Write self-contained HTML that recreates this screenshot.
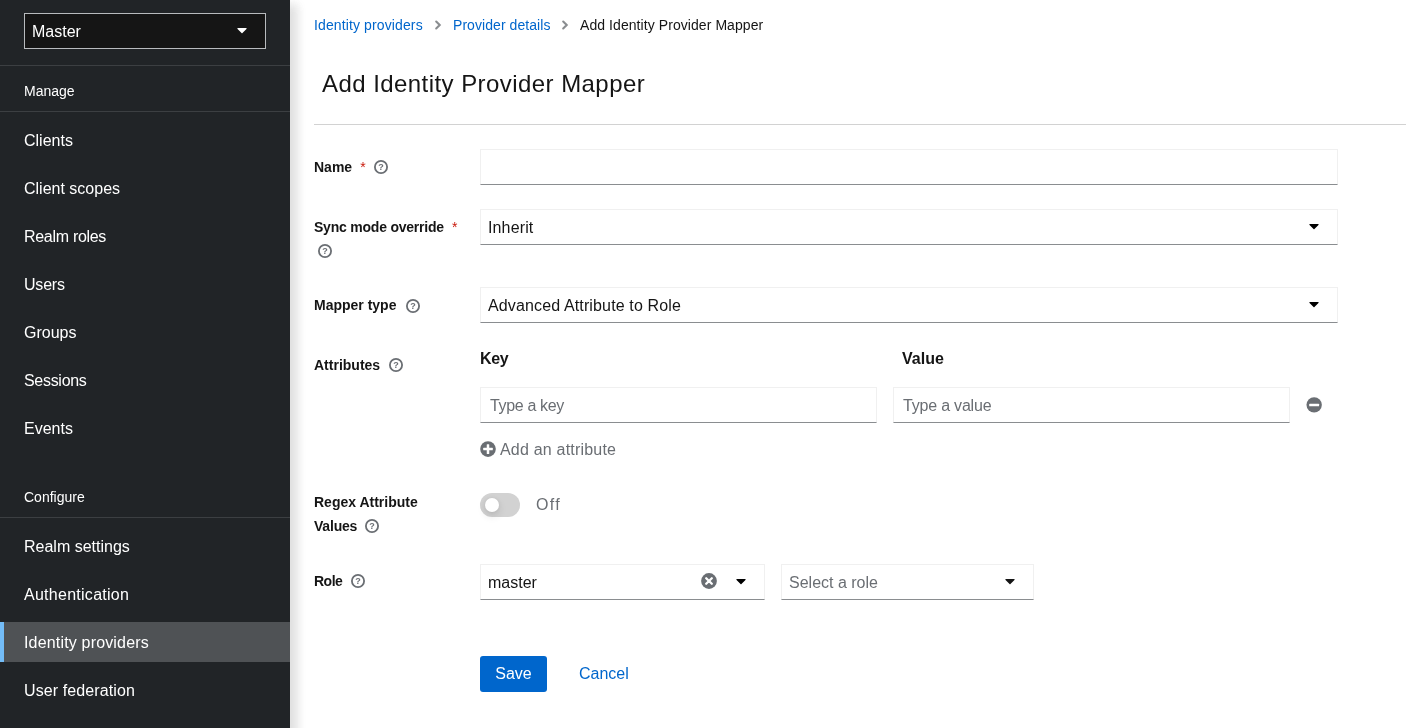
<!DOCTYPE html>
<html lang="en">
<head>
<meta charset="utf-8">
<title>Add Identity Provider Mapper</title>
<style>
*{box-sizing:border-box;margin:0;padding:0}
html,body{width:1406px;height:728px;overflow:hidden;background:#fff}
body{font-family:"Liberation Sans",sans-serif;font-size:16px;color:#151515;position:relative}
#side{position:absolute;left:0;top:0;width:290px;height:728px;background:#212427;color:#fff;z-index:2;will-change:transform}
#shade{position:absolute;left:0;top:0;width:290px;height:780px;box-shadow:12px 0 10px -4px rgba(3,3,3,.068),12px 0 10px -4px rgba(3,3,3,.068);z-index:-1}
#realm{position:absolute;left:24px;top:13px;width:242px;height:36px;border:1px solid #b8bbbe;background:#151515;}
#realm span{position:absolute;left:7px;top:0;line-height:35px;font-size:16px}
.hr{position:absolute;left:0;width:290px;height:1px;background:#3c3f42}
.sect{position:absolute;left:24px;font-size:14px;line-height:21px}
.item{position:absolute;left:0;width:290px;height:40px;padding-left:24px;line-height:41px;font-size:16px;white-space:nowrap}
.item.cur{background:#4f5255}
.item.cur:before{content:"";position:absolute;left:0;top:0;width:4px;height:40px;background:#73bcf7}
#main{position:absolute;left:290px;top:0;width:1116px;height:728px;will-change:transform}
.abs{position:absolute}
.bc{position:absolute;top:15px;font-size:14px;line-height:21px;white-space:nowrap}
a{color:#06c;text-decoration:none}
h1{position:absolute;left:32px;top:66px;font-size:24px;font-weight:400;line-height:36px;white-space:nowrap;letter-spacing:.44px}
.lbl{position:absolute;left:24px;font-size:14px;font-weight:700;line-height:21px;white-space:nowrap}
.req{color:#c9190b;font-weight:400;margin-left:8px;letter-spacing:0}
.inp{position:absolute;height:36px;border:1px solid #f0f0f0;border-bottom-color:#8a8d90;background:#fff;font-size:16px;line-height:35px;padding-left:7px;white-space:nowrap}
.ph{color:#6a6e73}
svg.caret{position:absolute;top:8px;width:10px;height:16px}
svg.help{position:absolute;width:16px;height:16px}
</style>
</head>
<body>
<svg width="0" height="0" style="position:absolute">
  <defs>
    <symbol id="caret" viewBox="0 0 320 512"><path d="M31.3 192h257.3c17.800 0 26.700 21.500 14.100 34.100L174.100 354.800c-7.800 7.800-20.500 7.800-28.300 0L17.200 226.100C4.600 213.500 13.500 192 31.300 192z"/></symbol>
    <symbol id="help" viewBox="0 0 16 16"><circle cx="8" cy="8" r="6.100" fill="none" stroke="#6a6e73" stroke-width="1.800"/><text x="8" y="11.200" text-anchor="middle" font-family="Liberation Sans, sans-serif" font-weight="700" font-size="9" fill="#6a6e73">?</text></symbol>
  </defs>
</svg>
<div id="side">
  <div id="shade"></div>
  <div id="realm"><span>Master</span><svg class="caret" style="left:212px;top:8px" fill="#fff"><use href="#caret"/></svg></div>
  <div class="hr" style="top:65px"></div>
  <div class="sect" style="top:81px">Manage</div>
  <div class="hr" style="top:111px"></div>
  <div class="item" style="top:120px">Clients</div>
  <div class="item" style="top:168px">Client scopes</div>
  <div class="item" style="top:216px;letter-spacing:-.3px">Realm roles</div>
  <div class="item" style="top:264px;letter-spacing:-.2px">Users</div>
  <div class="item" style="top:312px">Groups</div>
  <div class="item" style="top:360px;letter-spacing:-.3px">Sessions</div>
  <div class="item" style="top:408px">Events</div>
  <div class="sect" style="top:487px">Configure</div>
  <div class="hr" style="top:517px"></div>
  <div class="item" style="top:526px">Realm settings</div>
  <div class="item" style="top:574px;letter-spacing:.27px">Authentication</div>
  <div class="item cur" style="top:622px;letter-spacing:.17px">Identity providers</div>
  <div class="item" style="top:670px;letter-spacing:.1px">User federation</div>
</div>
<div id="main">
  <div class="bc" style="left:24px;letter-spacing:.12px"><a>Identity providers</a></div>
  <svg class="abs" style="left:144px;top:20px" width="8" height="10" viewBox="0 0 8 10"><path d="M2.200 1.600 L5.700 5 L2.200 8.400" fill="none" stroke="#8a8d90" stroke-width="2.100" stroke-linecap="round"/></svg>
  <div class="bc" style="left:163px;letter-spacing:.06px"><a>Provider details</a></div>
  <svg class="abs" style="left:271px;top:20px" width="8" height="10" viewBox="0 0 8 10"><path d="M2.200 1.600 L5.700 5 L2.200 8.400" fill="none" stroke="#8a8d90" stroke-width="2.100" stroke-linecap="round"/></svg>
  <div class="bc" style="left:290px;letter-spacing:.07px">Add Identity Provider Mapper</div>
  <h1>Add Identity Provider Mapper</h1>
  <div class="abs" style="left:24px;top:124px;width:1092px;height:1px;background:#d2d2d2"></div>

  <div class="lbl" style="top:157px">Name<span class="req">*</span></div>
  <svg class="help" style="left:83.250px;top:159px"><use href="#help"/></svg>
  <div class="inp" style="left:190px;top:149px;width:858px"></div>

  <div class="lbl" style="top:217px;letter-spacing:-.22px">Sync mode override<span class="req">*</span></div>
  <svg class="help" style="left:27px;top:243.250px"><use href="#help"/></svg>
  <div class="inp" style="left:190px;top:209px;width:858px;letter-spacing:.14px">Inherit<svg class="caret" style="left:828px"><use href="#caret"/></svg></div>

  <div class="lbl" style="top:295px">Mapper type</div>
  <svg class="help" style="left:115px;top:297.500px"><use href="#help"/></svg>
  <div class="inp" style="left:190px;top:287px;width:858px;letter-spacing:.135px">Advanced Attribute to Role<svg class="caret" style="left:828px"><use href="#caret"/></svg></div>

  <div class="lbl" style="top:355px">Attributes</div>
  <svg class="help" style="left:98.250px;top:357.250px"><use href="#help"/></svg>
  <div class="abs" style="left:190px;top:347px;font-weight:700;font-size:16px;line-height:24px;letter-spacing:-.4px">Key</div>
  <div class="abs" style="left:612px;top:347px;font-weight:700;font-size:16px;line-height:24px">Value</div>
  <div class="inp ph" style="left:190px;top:387px;width:397px;padding-left:9px;letter-spacing:-.35px">Type a key</div>
  <div class="inp ph" style="left:603px;top:387px;width:397px;padding-left:9px;letter-spacing:-.2px">Type a value</div>
  <svg class="abs" style="left:1016px;top:397px" width="17" height="17" viewBox="0 0 17 17"><circle cx="8.150" cy="7.850" r="7.700" fill="#6a6e73"/><rect x="3.200" y="6.700" width="9.900" height="2.600" rx=".6" fill="#fff"/></svg>
  <svg class="abs" style="left:190px;top:441px" width="17" height="17" viewBox="0 0 17 17"><circle cx="8" cy="8.100" r="7.800" fill="#6a6e73"/><rect x="3.200" y="6.850" width="9.600" height="2.500" rx=".5" fill="#fff"/><rect x="6.750" y="3.300" width="2.500" height="9.600" rx=".5" fill="#fff"/></svg>
  <div class="abs ph" style="left:210px;top:438px;font-size:16px;line-height:24px;letter-spacing:.2px">Add an attribute</div>

  <div class="lbl" style="top:492px">Regex Attribute</div>
  <div class="lbl" style="top:516px;letter-spacing:-.2px">Values</div>
  <svg class="help" style="left:74.250px;top:518.250px"><use href="#help"/></svg>
  <div class="abs" style="left:190px;top:493px;width:40px;height:24px;border-radius:12px;background:#d2d2d2"><div class="abs" style="left:5px;top:5px;width:14px;height:14px;border-radius:50%;background:#fff;box-shadow:0 4px 8px 0 rgba(3,3,3,.12),0 0 4px 0 rgba(3,3,3,.06)"></div></div>
  <div class="abs ph" style="left:246px;top:493px;font-size:16px;line-height:24px;letter-spacing:1.300px">Off</div>

  <div class="lbl" style="top:571px;letter-spacing:-.5px">Role</div>
  <svg class="help" style="left:60.250px;top:573.250px"><use href="#help"/></svg>
  <div class="inp" style="left:190px;top:564px;width:285px">master<svg class="caret" style="left:255px"><use href="#caret"/></svg>
    <svg class="abs" style="left:219px;top:7px" width="18" height="18" viewBox="0 0 18 18"><circle cx="9" cy="9" r="7.900" fill="#6a6e73"/><path d="M6.200 6.200 L11.800 11.800 M11.800 6.200 L6.200 11.800" stroke="#fff" stroke-width="2.300" stroke-linecap="round"/></svg>
  </div>
  <div class="inp ph" style="left:491px;top:564px;width:253px">Select a role<svg class="caret" style="left:223px" fill="#151515"><use href="#caret"/></svg></div>

  <div class="abs" style="left:190px;top:656px;width:67px;height:36px;border-radius:3px;background:#06c;color:#fff;text-align:center;line-height:36px;font-size:16px">Save</div>
  <div class="abs" style="left:289px;top:656px;line-height:36px;font-size:16px"><a>Cancel</a></div>
</div>
</body>
</html>
